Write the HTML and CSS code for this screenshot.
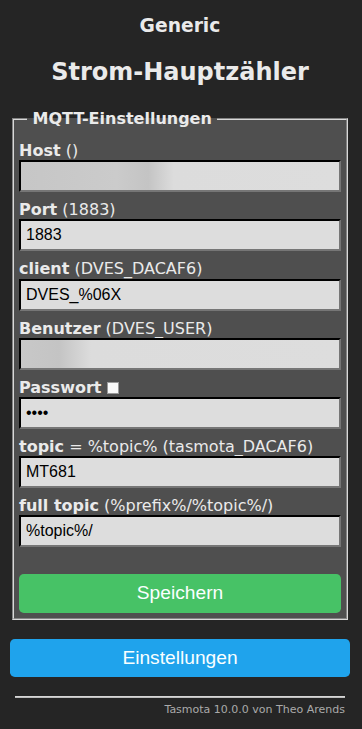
FILE: index.html
```html
<!DOCTYPE html>
<html lang="de">
<head>
    <meta charset="UTF-8">
    <meta name="viewport" content="width=device-width, initial-scale=1.0">
    <title>Strom-Hauptzähler - MQTT</title>
    <link rel="stylesheet" href="styles.css">
</head>
<body>
    <div class="page">
        <div class="header">
            <h3>Generic</h3>
            <h2>Strom-Hauptzähler</h2>
        </div>

        <fieldset class="box">
            <legend><b>&nbsp;MQTT-Einstellungen&nbsp;</b></legend>
            <form class="mqtt-form">
                <p class="field"><b>Host</b> ()<br><input class="blur-long" value=""></p>
                <p class="field"><b>Port</b> (1883)<br><input value="1883"></p>
                <p class="field"><b>client</b> (DVES_DACAF6)<br><input value="DVES_%06X"></p>
                <p class="field"><b>Benutzer</b> (DVES_USER)<br><input class="blur-short" value=""></p>
                <p class="field"><b>Passwort</b><input type="checkbox" class="show-pw"><br><input type="password" value="****"></p>
                <p class="field"><b>topic</b> = %topic% (tasmota_DACAF6)<br><input value="MT681"></p>
                <p class="field"><b>full topic</b> (%prefix%/%topic%/)<br><input value="%topic%/"></p>
                <br>
                <button type="button" class="button green">Speichern</button>
            </form>
        </fieldset>

        <div class="nav">
            <button type="button" class="button">Einstellungen</button>
        </div>

        <div class="footer">
            <hr>
            <a href="#">Tasmota 10.0.0 von Theo Arends</a>
        </div>
    </div>
</body>
</html>
```

FILE: styles.css
```css
* {
    box-sizing: border-box;
}

body {
    margin: 0;
    background: #252525;
    color: #eaeaea;
    font-family: 'DejaVu Sans', Verdana, sans-serif;
    font-size: 16px;
}

.page {
    width: 340px;
    margin: 0 0 0 10px;
}

.header {
    text-align: center;
    padding-top: 15px;
}

.header h3 {
    margin: 0;
    font-size: 18.72px;
    line-height: 22px;
}

.header h2 {
    margin: 21px 0 0;
    font-size: 24px;
    line-height: 28px;
}

.box {
    margin: 23px 2px 0;
    padding: 5px;
    background: #4f4f4f;
    border: 2px groove #d8d8d8;
}

.box legend {
    padding: 0;
    margin-left: 8px;
    line-height: 19px;
}

.field {
    margin: 8px 0;
    line-height: 19.2px;
}

.field input {
    width: 100%;
    padding: 5px;
    font-family: 'Liberation Sans', Arial, sans-serif;
    font-size: 16px;
    background: #dddddd;
    color: #000;
    border: 2px inset #767676;
    border-color: #2b2b2b #767676 #767676 #2b2b2b;
}

.field input.blur-long {
    background: linear-gradient(90deg, #c6c6c6 0, #cbcbcb 30%, #c4c4c4 40%, #dcdcdc 48%, #dddddd 100%);
}

.field input.blur-short {
    background: linear-gradient(90deg, #c8c8c8 0, #c4c4c4 12%, #dcdcdc 22%, #dddddd 100%);
}

.field input.show-pw {
    appearance: none;
    width: 12px;
    height: 12px;
    margin: 0 0 -1px 6px;
    padding: 0;
    background: #fafafa;
    border: 1px solid #9a9a9a;
    vertical-align: baseline;
}

.button {
    display: block;
    width: 100%;
    border: 0;
    border-radius: 0.3rem;
    background: #1fa3ec;
    color: #faffff;
    font-family: 'Liberation Sans', Arial, sans-serif;
    font-size: 1.2rem;
    line-height: 2.4rem;
    padding: 0;
}

.green {
    background: #47c266;
}

.nav {
    margin-top: 19px;
}

.footer {
    padding: 5px;
    margin-top: 8px;
    text-align: right;
    font-size: 11px;
}

.footer hr {
    margin: 6px 0 5px;
    border: 0;
    border-top: 1px solid #d6d6d6;
    border-bottom: 1px solid #bdbdbd;
}

.footer a {
    color: #aaa;
    text-decoration: none;
}
```
